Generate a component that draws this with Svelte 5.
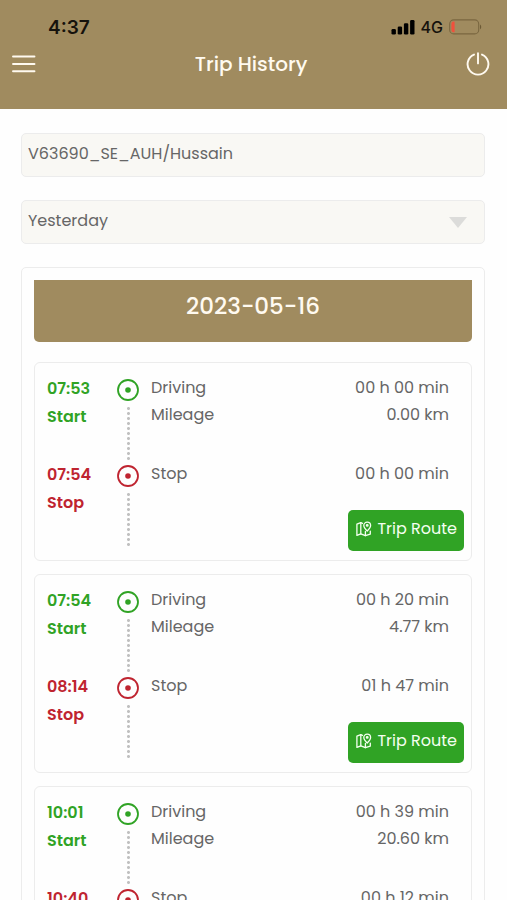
<script lang="ts">
	interface Trip {
		start: string;
		stop: string;
		driving: string;
		mileage: string;
		stopped: string;
	}

	let vehicle = $state('V63690_SE_AUH/Hussain');
	let period = $state('Yesterday');

	const trips: Trip[] = [
		{ start: '07:53', stop: '07:54', driving: '00 h 00 min', mileage: '0.00 km', stopped: '00 h 00 min' },
		{ start: '07:54', stop: '08:14', driving: '00 h 20 min', mileage: '4.77 km', stopped: '01 h 47 min' },
		{ start: '10:01', stop: '10:40', driving: '00 h 39 min', mileage: '20.60 km', stopped: '00 h 12 min' }
	];
</script>

{#snippet rail()}
	<div class="rail">
		<svg width="22" height="22" viewBox="0 0 22 22" aria-hidden="true">
			<circle cx="11" cy="11" r="10" fill="none" stroke="currentColor" stroke-width="1.8" />
			<circle cx="11" cy="11" r="2.8" fill="currentColor" />
		</svg>
		<div class="dots"></div>
	</div>
{/snippet}

<div class="screen">
	<header>
		<div class="status">
			<span class="clock">4:37</span>
			<div class="signals">
				<svg width="24" height="16" viewBox="0 0 24 16" aria-hidden="true">
					<rect x="0.5" y="10" width="4.4" height="5.5" rx="1.3" />
					<rect x="6.7" y="7.5" width="4.4" height="8" rx="1.3" />
					<rect x="12.9" y="4.3" width="4.4" height="11.2" rx="1.3" />
					<rect x="19.1" y="1" width="4.4" height="14.5" rx="1.3" />
				</svg>
				<span>4G</span>
				<svg width="33" height="16" viewBox="0 0 33 16" aria-hidden="true">
					<rect x="0.7" y="0.9" width="29" height="14" rx="4" fill="none" stroke="#7a6740" stroke-width="1.1" />
					<path d="M5.6 2.6H4.6a2.2 2.2 0 0 0-2.2 2.2v6.2a2.2 2.2 0 0 0 2.2 2.2h1z" fill="#f0503c" />
					<path d="M31 5.5c1.6.7 1.6 4.1 0 4.8z" fill="#6c5a35" />
				</svg>
			</div>
		</div>
		<div class="bar">
			<button class="icon" aria-label="Menu">
				<svg width="24" height="24" viewBox="0 0 24 24" aria-hidden="true">
					<path d="M1 4.5h21.500M1 12h21.500M1 19.300h21.500" stroke="currentColor" stroke-width="1.9" stroke-linecap="round" />
				</svg>
			</button>
			<h1>Trip History</h1>
			<button class="icon" aria-label="Log out">
				<svg width="24" height="24" viewBox="0 0 24 24" fill="none" aria-hidden="true">
					<path
						d="M8 2.6a10.4 10.4 0 1 0 8 0M12 1.2v10.2"
						stroke="currentColor"
						stroke-width="1.9"
						stroke-linecap="round"
					/>
				</svg>
			</button>
		</div>
	</header>

	<main>
		<input class="field" type="text" aria-label="Vehicle" bind:value={vehicle} />

		<div class="select">
			<select class="field" aria-label="Period" bind:value={period}>
				<option>Today</option>
				<option>Yesterday</option>
				<option>Last week</option>
			</select>
			<span class="caret"></span>
		</div>

		<section class="panel">
			<h2>2023-05-16</h2>
			{#each trips as trip (trip.start)}
				<article class="trip">
					<div class="stage start">
						<div class="time">{trip.start}<br />Start</div>
						{@render rail()}
						<div class="details">
							<div class="row"><span>Driving</span><span>{trip.driving}</span></div>
							<div class="row"><span>Mileage</span><span>{trip.mileage}</span></div>
						</div>
					</div>
					<div class="stage stop">
						<div class="time">{trip.stop}<br />Stop</div>
						{@render rail()}
						<div class="details">
							<div class="row"><span>Stop</span><span>{trip.stopped}</span></div>
							<button class="route">
								<svg width="16" height="16" viewBox="0 0 16 16" fill="none" aria-hidden="true">
									<g stroke="currentColor" stroke-width="1.3" stroke-linejoin="round" stroke-linecap="round">
										<path d="M6.4 2.4 4.8 1.6.9 3.2v11.2l3.9-1.6 4.6 1.9 4.9-1.6v-3" />
										<path d="M4.8 1.6v11.2M9.4 10.4v4.3" />
										<path d="M11.2 10C8.9 7.7 7.8 6.2 7.8 4.5a3.4 3.4 0 0 1 6.8 0c0 1.7-1.1 3.2-3.4 5.5z" />
										<circle cx="11.2" cy="4.4" r="0.8" />
									</g>
								</svg>
								Trip Route
							</button>
						</div>
					</div>
				</article>
			{/each}
		</section>
	</main>
</div>

<style>
	:global(body) {
		margin: 0;
		background: #fefefe;
	}

	.screen {
		--brand: #a08b5f;
		--green: #30a325;
		--red: #bf2430;
		--line: #ececec;

		display: flex;
		flex-direction: column;
		height: 100vh;
		font-family: Poppins, Inter, sans-serif;
		font-size: 16px;
		color: #666;
	}

	button,
	input,
	select {
		font: inherit;
		color: inherit;
	}

	button {
		border: 0;
		cursor: pointer;
	}

	svg {
		display: block;
		flex: none;
	}

	header {
		flex: none;
		padding: 13px 17px 22px 12px;
		background: var(--brand);
	}

	.status {
		display: flex;
		justify-content: space-between;
		align-items: center;
		height: 28px;
		padding: 0 8px 0 36px;
		color: #15120c;
		font-family: Inter, sans-serif;
	}

	.clock {
		font-size: 19px;
		font-weight: 600;
	}

	.signals {
		display: flex;
		align-items: center;
		gap: 6px;
		font-weight: 500;
	}

	.bar {
		display: flex;
		justify-content: space-between;
		align-items: center;
		height: 46px;
		color: #fffaf0;
	}

	.icon {
		padding: 0;
		background: none;
	}

	h1 {
		margin: 0;
		font-size: 20px;
		font-weight: 500;
	}

	main {
		flex: 1;
		display: flex;
		flex-direction: column;
		gap: 23px;
		min-height: 0;
		padding: 24px 22px 24px 21px;
		overflow-y: auto;
		scrollbar-width: none;
	}

	.field {
		display: block;
		flex: none;
		box-sizing: border-box;
		width: 100%;
		height: 44px;
		padding: 0 6px 4px;
		border: 1px solid var(--line);
		border-radius: 5px;
		background: #f9f8f4;
		appearance: none;
	}

	.select {
		flex: none;
		position: relative;
	}

	select.field {
		padding-right: 40px;
	}

	.caret {
		position: absolute;
		top: 17px;
		right: 18px;
		border: 9px solid transparent;
		border-top: 11px solid #dcdcda;
		border-bottom: 0;
		pointer-events: none;
	}

	.panel {
		flex: none;
		padding: 12px;
		border: 1px solid var(--line);
		border-radius: 5px;
	}

	h2 {
		margin: 0 0 20px;
		padding: 8px 0 18px;
		border-radius: 0 0 5px 5px;
		background: var(--brand);
		color: #fffaf0;
		font-size: 23px;
		font-weight: 500;
		line-height: 36px;
		text-align: center;
	}

	.trip {
		padding: 11px 7px 9px 12px;
		border: 1px solid var(--line);
		border-radius: 6px;
	}

	.trip + .trip {
		margin-top: 13px;
	}

	.stage {
		display: grid;
		grid-template-columns: 70px 22px 1fr;
		min-height: 86px;
	}

	.start {
		color: var(--green);
	}

	.stop {
		color: var(--red);
	}

	.time {
		padding-top: 1px;
		font-weight: 600;
		line-height: 28px;
	}

	.rail {
		padding-top: 5px;
	}

	.dots {
		width: 3px;
		height: 54px;
		margin: 5px auto 0;
		background: radial-gradient(circle, #c0c0c0 1px, transparent 2px) 0 0 / 3px 5px;
	}

	.details {
		display: flex;
		flex-direction: column;
		padding-left: 12px;
		color: #666;
	}

	.row {
		display: flex;
		justify-content: space-between;
		padding-right: 15px;
		line-height: 27px;
	}

	.route {
		display: flex;
		align-items: center;
		align-self: flex-end;
		gap: 5px;
		height: 41px;
		margin-top: 23px;
		padding: 0 7px 4px 8px;
		border-radius: 5px;
		background: var(--green);
		color: #f4fff0;
	}
</style>
